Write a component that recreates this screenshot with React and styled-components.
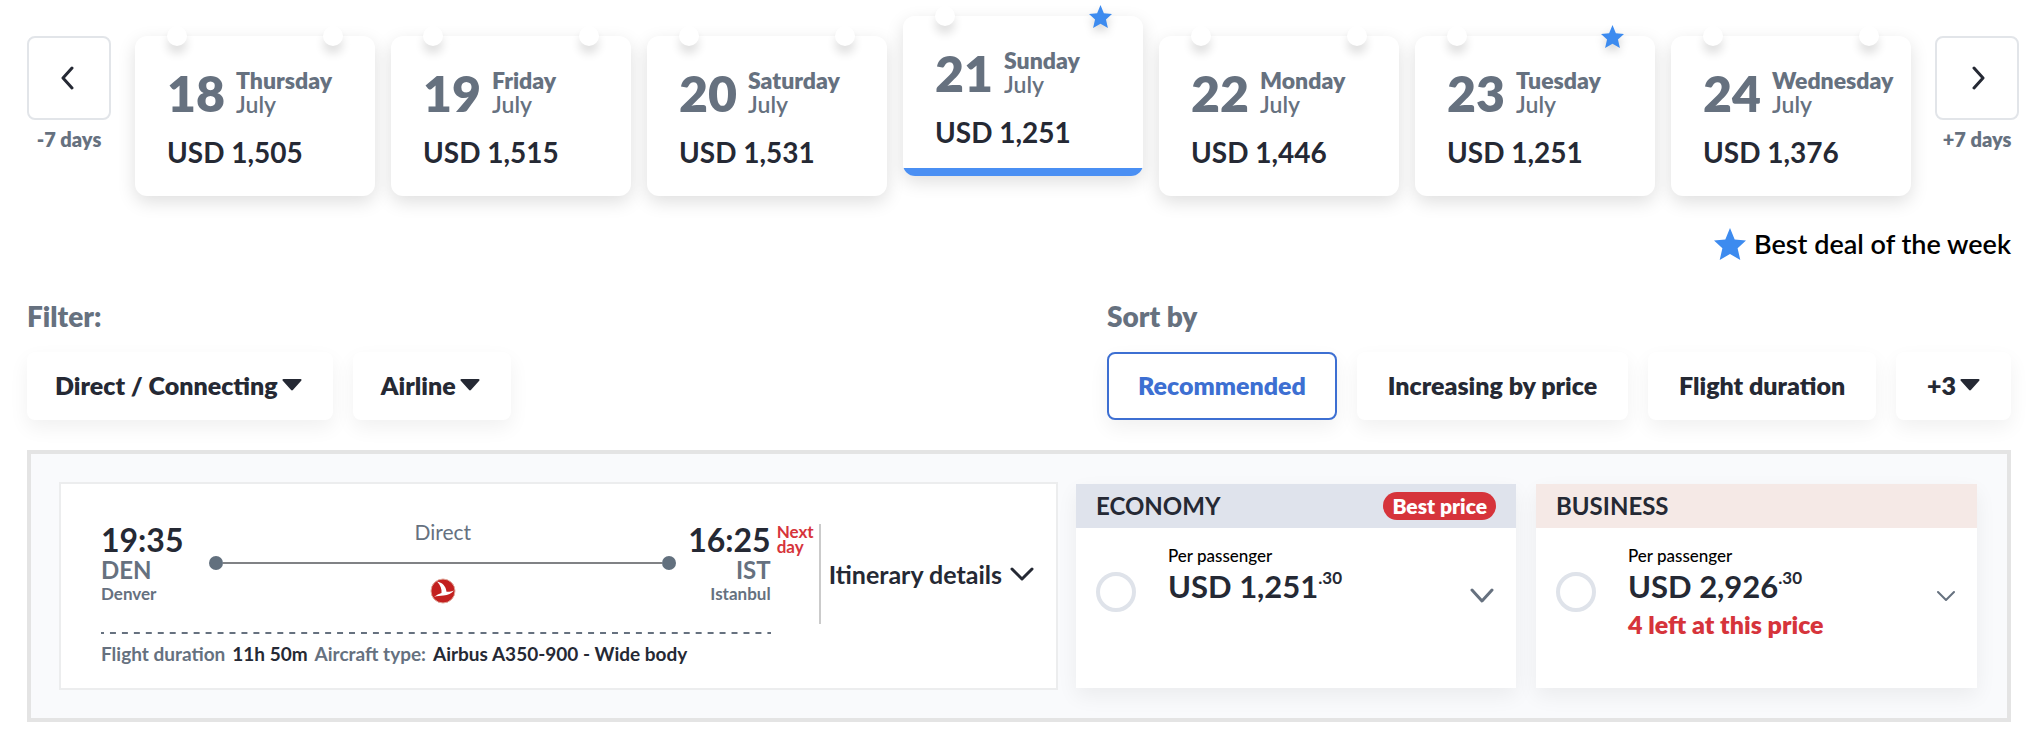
import React from "react";
import styled, { createGlobalStyle, css } from "styled-components";

const ink = "#252934";
const slate = "#66717f";
const red = "#d6343b";
const blue = "#3d8bef";

const GlobalStyle = createGlobalStyle`
  *, *::before, *::after { box-sizing: border-box; }
  body {
    margin: 0;
    background: #fff;
    color: ${ink};
    font-family: Lato, "Noto Sans", sans-serif;
  }
  button { font: inherit; color: inherit; cursor: pointer; }
  h2, h3, p { margin: 0; }
`;

const Page = styled.main`
  padding: 36px 19px 18px 27px;
`;

/* Week strip */

const Week = styled.section`
  display: flex;
  align-items: flex-start;
  gap: 24px;
`;

const Days = styled.div`
  flex: 1;
  display: grid;
  grid-template-columns: repeat(7, minmax(0, 1fr));
  align-items: start;
  gap: 16px;
`;

const Shift = styled.label`
  display: flex;
  flex-direction: column;
  align-items: center;
  gap: 7px;
  width: 84px;
  color: ${slate};
  font-size: 20px;
  line-height: 24px;
  font-weight: 800;
`;

const ShiftButton = styled.button`
  display: grid;
  place-items: center;
  width: 84px;
  height: 84px;
  padding: 0;
  border: 2px solid #e2e5e9;
  border-radius: 8px;
  background: #fff;
  color: ${ink};
`;

const DayCard = styled.button`
  position: relative;
  display: flex;
  flex-direction: column;
  gap: 18px;
  height: 160px;
  padding: 32px 0 0 32px;
  border: 0;
  border-radius: 12px;
  background: #fff;
  box-shadow: 0 6px 18px rgba(0, 0, 0, 0.13);
  text-align: left;
  ${(p) =>
    p.$selected &&
    css`
      margin-top: -20px;
      background: linear-gradient(to top, #4a8ff3 8px, #fff 8px);
    `}
`;

const DateRow = styled.span`
  display: flex;
  gap: 11px;
  color: ${slate};
`;

const DayNumber = styled.span`
  font-size: 50px;
  line-height: 50px;
  font-weight: 800;
`;

const DayName = styled.span`
  display: flex;
  flex-direction: column;
  font-size: 23px;
  line-height: 24px;
  font-weight: 800;
`;

const Month = styled.span`
  font-weight: 600;
`;

const DayPrice = styled.span`
  font-size: 28px;
  line-height: 32px;
  font-weight: 700;
`;

const Pin = styled.span`
  position: absolute;
  top: -10px;
  ${(p) => p.$side}: 32px;
  width: 20px;
  height: 20px;
  border-radius: 50%;
  background: #fff;
  box-shadow: 0 8px 10px rgba(0, 0, 0, 0.12);
`;

const StarPin = styled.span`
  position: absolute;
  top: -11px;
  right: 31px;
  display: flex;
  filter: drop-shadow(0 5px 4px rgba(0, 0, 0, 0.16));
`;

const BestDeal = styled.p`
  display: flex;
  justify-content: flex-end;
  gap: 8px;
  margin: 32px 8px 0 0;
  color: #000;
  font-size: 27px;
  line-height: 32px;
  font-weight: 600;
`;

/* Filter and sort bar */

const Tools = styled.section`
  display: flex;
  justify-content: space-between;
  margin: 40px 8px 30px 0;
`;

const ToolGroup = styled.div`
  display: flex;
  flex-direction: column;
  gap: 20px;
  min-width: ${(p) => p.$min || "0"};
`;

const ToolLabel = styled.h2`
  color: ${slate};
  font-size: 28px;
  line-height: 32px;
  font-weight: 800;
`;

const ToolRow = styled.div`
  display: flex;
  gap: 20px;
`;

const ToolButton = styled.button`
  flex: 1 1 auto;
  display: flex;
  align-items: center;
  justify-content: center;
  gap: 4px;
  height: 68px;
  padding: ${(p) => (p.$menu ? "0 29px 2px 26px" : "0 28px 2px")};
  border: 2px solid ${(p) => (p.$active ? "#3d6fd2" : "transparent")};
  border-radius: 8px;
  background: #fff;
  box-shadow: 0 8px 20px rgba(0, 0, 0, 0.06);
  color: ${(p) => (p.$active ? "#3d6fd2" : ink)};
  font-size: 25px;
  font-weight: 800;
`;

/* Flight result */

const Result = styled.section`
  display: grid;
  grid-template-columns: 995fr 440fr 441fr;
  gap: 20px;
  margin-right: 8px;
  padding: 30px;
  border: 4px solid #e4e4e4;
  background: #f9fafc;
`;

const Flight = styled.article`
  display: flex;
  align-items: flex-start;
  min-height: 204px;
  padding: 40px 22px 20px 40px;
  background: #fff;
  box-shadow: 0 0 0 2px #ecedee;
`;

const Route = styled.div`
  flex: 1;
`;

const Leg = styled.div`
  display: flex;
  align-items: flex-start;
  padding-bottom: 28px;
`;

const Stop = styled.div`
  display: flex;
  flex-direction: column;
  text-align: ${(p) => p.$align || "left"};
  color: ${slate};
  font-weight: 700;
`;

const Time = styled.span`
  color: ${ink};
  font-size: 32px;
  line-height: 32px;
`;

const Code = styled.span`
  font-size: 24px;
  line-height: 28px;
`;

const City = styled.span`
  font-size: 17px;
  line-height: 20px;
`;

const Track = styled.div`
  flex: 1;
  display: flex;
  flex-direction: column;
  align-items: center;
  margin: 0 12px 0 26px;
  color: ${slate};
  font-size: 21px;
  line-height: 16px;
`;

const Line = styled.div`
  display: flex;
  align-items: center;
  justify-content: space-between;
  align-self: stretch;
  height: 14px;
  margin: 16px 0 8px;
  &::before,
  &::after {
    content: "";
    width: 14px;
    height: 14px;
    border-radius: 50%;
    background: #62707e;
  }
`;

const Stroke = styled.span`
  flex: 1;
  height: 2px;
  background: #808285;
`;

const Dashes = styled.div`
  height: 2px;
  margin-bottom: 8px;
  background-image: linear-gradient(to right, #66717f 0 25%, transparent 25% 75%, #66717f 75%);
  background-size: 12px 2px;
  background-repeat: round no-repeat;
`;

const Facts = styled.p`
  display: flex;
  gap: 7px;
  color: ${slate};
  font-size: 19px;
  line-height: 24px;
  font-weight: 700;
  white-space: nowrap;
`;

const FactValue = styled.strong`
  color: ${ink};
  font-weight: 700;
`;

const NextDay = styled.p`
  width: 48px;
  padding-left: 6px;
  color: ${red};
  font-size: 17px;
  line-height: 15px;
  font-weight: 700;
`;

const Details = styled.button`
  display: flex;
  align-items: center;
  gap: 8px;
  height: 100px;
  padding: 0 0 0 8px;
  border: 0;
  border-left: 2px solid #cbcbcb;
  background: none;
  font-size: 25px;
  font-weight: 700;
`;

/* Fares */

const Fare = styled.article`
  background: #fff;
  box-shadow: 0 8px 20px rgba(0, 0, 0, 0.06);
`;

const FareHead = styled.header`
  display: flex;
  align-items: center;
  justify-content: space-between;
  height: 44px;
  padding: 0 20px;
  background: ${(p) => p.$tint};
`;

const FareTitle = styled.h3`
  font-size: 24px;
  line-height: 44px;
  font-weight: 700;
`;

const Badge = styled.span`
  padding: 0 9px;
  border-radius: 14px;
  background: ${red};
  color: #fff;
  font-size: 21px;
  line-height: 28px;
  font-weight: 800;
`;

const FareBody = styled.label`
  display: flex;
  align-items: flex-start;
  padding: 18px 22px 0 20px;
`;

const Radio = styled.input.attrs({ type: "radio" })`
  appearance: none;
  width: 40px;
  height: 40px;
  margin: 26px 32px 0 0;
  border: 4px solid #dfe3ea;
  border-radius: 50%;
  background: #fff;
  &:checked {
    border-width: 12px;
    border-color: ${blue};
  }
`;

const FareText = styled.span`
  flex: 1;
  display: flex;
  flex-direction: column;
`;

const Per = styled.span`
  color: #000;
  font-size: 17px;
  line-height: 20px;
  font-weight: 500;
`;

const FarePrice = styled.span`
  display: flex;
  font-size: 31px;
  line-height: 40px;
  font-weight: 700;
`;

const Cents = styled.span`
  font-size: 17px;
  line-height: 24px;
`;

const Left = styled.span`
  color: ${red};
  font-size: 25px;
  line-height: 36px;
  font-weight: 800;
`;

const Expand = styled.button`
  display: grid;
  place-items: center;
  height: 40px;
  margin-top: 30px;
  padding: 0;
  border: 0;
  background: none;
  color: #66717f;
`;

const Star = ({ size }) => (
  <svg width={size} height={size} viewBox="0 0 32 32" aria-hidden="true">
    <path d="M16 0l4.7 11.500L32 12.600l-8.400 7.600L26.300 32 16 26 5.700 32l2.700-11.800L0 12.600l11.300-1.100z" fill={blue} />
  </svg>
);

const Caret = () => (
  <svg width="20" height="12" viewBox="0 0 20 12" aria-hidden="true">
    <path d="M1.500 0h17c1 0 1.400 1 .7 1.700l-8.300 9.300c-.5.600-1.300.600-1.800 0L.8 1.700C.1 1 .5 0 1.500 0z" fill={ink} />
  </svg>
);

const Chevron = ({ width, height, points, stroke = 3 }) => (
  <svg width={width} height={height} viewBox={`0 0 ${width} ${height}`} aria-hidden="true">
    <polyline
      points={points}
      fill="none"
      stroke="currentColor"
      strokeWidth={stroke}
      strokeLinecap="round"
      strokeLinejoin="round"
    />
  </svg>
);

const AirlineLogo = () => (
  <svg width="26" height="26" viewBox="0 0 26 26" role="img" aria-label="Airline">
    <circle cx="13" cy="13" r="12" fill="#c3201f" stroke="#e0a79a" strokeWidth="1" />
    <path
      d="M7 3.500c5 .8 9 4.500 9.500 10.300 2.800.1 5.500-.3 7.500-1.300-2.500 3.200-6 4.800-10.500 5-3.500.2-6.500.5-9.500 1.500 2.500-2 5-3.200 7.500-4C12 11.500 10.500 7 7 3.500z"
      fill="#fff"
    />
  </svg>
);

const days = [
  { date: 18, name: "Thursday", price: "1,505" },
  { date: 19, name: "Friday", price: "1,515" },
  { date: 20, name: "Saturday", price: "1,531" },
  { date: 21, name: "Sunday", price: "1,251", best: true, selected: true },
  { date: 22, name: "Monday", price: "1,446" },
  { date: 23, name: "Tuesday", price: "1,251", best: true },
  { date: 24, name: "Wednesday", price: "1,376" },
];

const fares = [
  { title: "ECONOMY", tint: "#dfe3ec", price: "USD 1,251", best: true, arrow: { width: 24, height: 16, points: "2,2 12,13 22,2" } },
  { title: "BUSINESS", tint: "#f5e9e6", price: "USD 2,926", left: "4 left at this price", arrow: { width: 18, height: 12, points: "1,2 9,10 17,2", stroke: 2 } },
];

export default function App() {
  return (
    <>
      <GlobalStyle />
      <Page>
        <Week>
          <Shift>
            <ShiftButton type="button">
              <Chevron width={16} height={24} points="11,2 2,12 11,22" />
            </ShiftButton>
            -7 days
          </Shift>
          <Days>
            {days.map((d) => (
              <DayCard key={d.date} type="button" $selected={d.selected} aria-pressed={!!d.selected}>
                <Pin $side="left" />
                {d.best ? (
                  <StarPin>
                    <Star size={23} />
                  </StarPin>
                ) : (
                  <Pin $side="right" />
                )}
                <DateRow>
                  <DayNumber>{d.date}</DayNumber>
                  <DayName>
                    {d.name}
                    <Month>July</Month>
                  </DayName>
                </DateRow>
                <DayPrice>USD {d.price}</DayPrice>
              </DayCard>
            ))}
          </Days>
          <Shift>
            <ShiftButton type="button">
              <Chevron width={16} height={24} points="5,2 14,12 5,22" />
            </ShiftButton>
            +7 days
          </Shift>
        </Week>

        <BestDeal>
          <Star size={32} />
          Best deal of the week
        </BestDeal>

        <Tools>
          <ToolGroup>
            <ToolLabel>Filter:</ToolLabel>
            <ToolRow>
              <ToolButton type="button" $menu>Direct / Connecting <Caret /></ToolButton>
              <ToolButton type="button" $menu>Airline <Caret /></ToolButton>
            </ToolRow>
          </ToolGroup>
          <ToolGroup $min="904px">
            <ToolLabel>Sort by</ToolLabel>
            <ToolRow>
              <ToolButton type="button" $active>Recommended</ToolButton>
              <ToolButton type="button">Increasing by price</ToolButton>
              <ToolButton type="button">Flight duration</ToolButton>
              <ToolButton type="button">+3 <Caret /></ToolButton>
            </ToolRow>
          </ToolGroup>
        </Tools>

        <Result>
          <Flight>
            <Route>
              <Leg>
                <Stop>
                  <Time>19:35</Time>
                  <Code>DEN</Code>
                  <City>Denver</City>
                </Stop>
                <Track>
                  Direct
                  <Line>
                    <Stroke />
                  </Line>
                  <AirlineLogo />
                </Track>
                <Stop $align="right">
                  <Time>16:25</Time>
                  <Code>IST</Code>
                  <City>Istanbul</City>
                </Stop>
              </Leg>
              <Dashes />
              <Facts>
                <span>Flight duration</span>
                <FactValue>11h 50m</FactValue>
                <span>Aircraft type:</span>
                <FactValue>Airbus A350-900 - Wide body</FactValue>
              </Facts>
            </Route>
            <NextDay>Next day</NextDay>
            <Details type="button">
              Itinerary details
              <Chevron width={24} height={16} points="2,3 12,13 22,3" />
            </Details>
          </Flight>

          {fares.map((f) => (
            <Fare key={f.title}>
              <FareHead $tint={f.tint}>
                <FareTitle>{f.title}</FareTitle>
                {f.best && <Badge>Best price</Badge>}
              </FareHead>
              <FareBody>
                <Radio name="fare" value={f.title} />
                <FareText>
                  <Per>Per passenger</Per>
                  <FarePrice>
                    {f.price}
                    <Cents>.30</Cents>
                  </FarePrice>
                  {f.left && <Left>{f.left}</Left>}
                </FareText>
                <Expand type="button" aria-label={`Show ${f.title} fares`}>
                  <Chevron {...f.arrow} />
                </Expand>
              </FareBody>
            </Fare>
          ))}
        </Result>
      </Page>
    </>
  );
}
